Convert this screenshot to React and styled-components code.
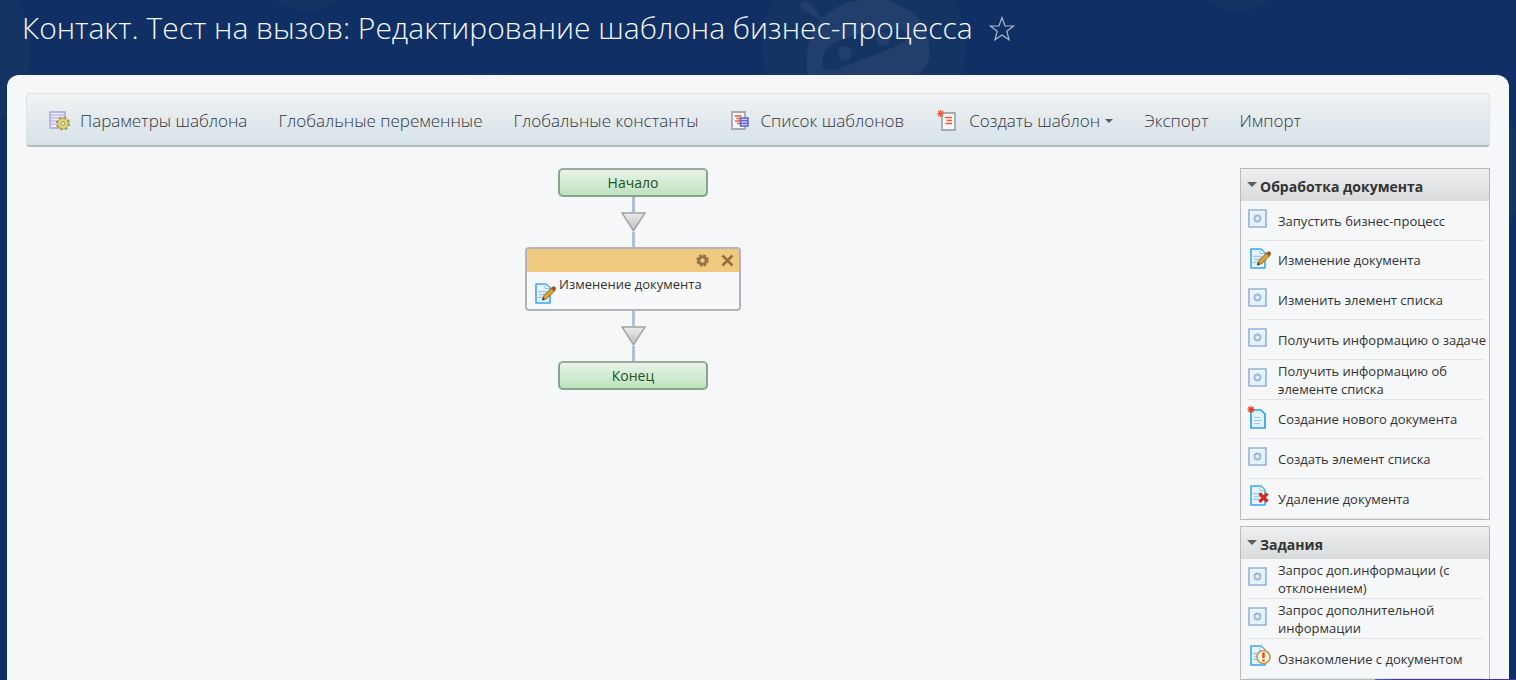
import React, { useState } from 'react';
import styled, { createGlobalStyle } from 'styled-components';

const GlobalStyle = createGlobalStyle`
  * {
    box-sizing: border-box;
  }

  body {
    margin: 0;
    background: #102f64;
    color: #333;
    font-family: 'Open Sans', 'Noto Sans', sans-serif;
    font-size: 13px;
  }
`;

const Page = styled.div`
  position: relative;
  display: flex;
  flex-direction: column;
  height: 100vh;
  overflow: hidden;
`;

const Backdrop = styled.svg`
  position: absolute;
  top: 0;
  left: 0;
  width: 100%;
  height: 100%;
`;

const PageHeader = styled.header`
  position: relative;
  display: flex;
  align-items: center;
  gap: 16px;
  flex: none;
  height: 75px;
  padding: 0 22px 18px;
`;

const Title = styled.h1`
  margin: 0;
  padding-bottom: 2px;
  color: #f4f7fb;
  font-size: 30px;
  font-weight: 300;
  line-height: 44px;
  white-space: nowrap;
`;

const PlainButton = styled.button`
  display: flex;
  padding: 0;
  border: 0;
  background: none;
  font: inherit;
  color: inherit;
  cursor: pointer;
`;

const Workarea = styled.main`
  position: relative;
  flex: 1;
  min-height: 0;
  margin: 0 7px;
  padding: 18px 19px 0;
  border-radius: 12px 12px 0 0;
  background: #f5f7f9;
`;

const Toolbar = styled.nav`
  display: flex;
  align-items: center;
  gap: 31px;
  height: 54px;
  padding: 2px 22px 0;
  border: 1px solid #dfe2e4;
  border-bottom: 2px solid #b5babe;
  border-radius: 4px;
  background: linear-gradient(#f1f2f3, #d6e2e8);
`;

const ToolbarLink = styled.a`
  display: flex;
  align-items: center;
  color: #303641;
  font-size: 17px;
  font-weight: 300;
  line-height: 24px;
  text-decoration: none;
  white-space: nowrap;

  svg {
    margin-right: 9px;
  }
`;

const Caret = styled.span`
  border: ${({ $size }) => $size}px solid transparent;
  border-top-color: #5b5f63;
  border-bottom: 0;

  ${ToolbarLink} & {
    margin-left: 5px;
  }
`;

const Columns = styled.div`
  display: flex;
  align-items: flex-start;
  margin-top: 21px;
`;

const Flow = styled.section`
  display: flex;
  flex: 1;
  flex-direction: column;
  align-items: center;
`;

const Terminal = styled.div`
  width: 150px;
  height: 29px;
  border: 2px solid #86a58a;
  border-top-color: #9bab9c;
  border-radius: 5px;
  background: linear-gradient(#e9f3e9, #bee3bf);
  color: #26501f;
  font-size: 14px;
  line-height: 25px;
  text-align: center;
`;

const Connector = styled.div`
  display: flex;
  flex-direction: column;
  align-items: center;

  &::before,
  &::after {
    content: '';
    width: 3px;
    height: 15px;
    background: #b0bfd8;
  }
`;

const Activity = styled.article`
  width: 216px;
  height: 64px;
  border: 2px solid #b5b3b9;
  border-radius: 4px;
  background: #f7f8fa;
`;

const ActivityBar = styled.div`
  display: flex;
  align-items: center;
  justify-content: flex-end;
  gap: 12px;
  height: 23px;
  padding: 0 5px;
  background: #efc980;
`;

const ActivityBody = styled.div`
  display: flex;
  gap: 2px;
  padding: 3px 5px;
  line-height: 18px;

  svg {
    margin-top: 7px;
  }
`;

const Sidebar = styled.aside`
  display: flex;
  flex: none;
  flex-direction: column;
  gap: 6px;
  width: 250px;
`;

const Group = styled.section`
  border: 1px solid #b9bcbf;
`;

const GroupTitle = styled.h2`
  margin: 0;
  background: linear-gradient(#eeeff0, #d9dadc);
  font-size: 14px;
  font-weight: 700;
`;

const GroupToggle = styled(PlainButton)`
  align-items: center;
  gap: 3px;
  width: 100%;
  padding: 4px 6px 0;
  line-height: 28px;

  ${Caret} {
    margin-bottom: 5px;
  }
`;

const List = styled.ul`
  margin: 0 6px;
  padding: 0;
  list-style: none;
`;

const Item = styled.li`
  display: grid;
  grid-template-columns: 31px 1fr;
  align-items: center;
  height: ${({ $compact }) => ($compact ? 39 : 40)}px;
  border-bottom: 1px solid #e0e2e5;
  line-height: 18px;

  svg {
    margin-bottom: ${({ $compact }) => ($compact ? 3 : 6)}px;
  }

  span {
    margin-right: -6px;
  }
`;

const ChatEdge = styled.div`
  position: fixed;
  right: 0;
  bottom: 0;
  width: 141px;
  height: 1px;
  background: linear-gradient(90deg, #4a66c4, #4033b0 20px);
`;

const StarIcon = () => (
  <svg width="26" height="26" viewBox="0 0 26 26">
    <path
      d="M13 1.5l3 8.3 8.6.2-6.8 5.2 2.3 8.6-7.1-4.9-7.1 4.9 2.3-8.6L1.4 10l8.6-.2z"
      fill="none"
      stroke="#aab5c7"
      strokeWidth="1.2"
    />
  </svg>
);

const TemplateSettingsIcon = () => (
  <svg width="22" height="22" viewBox="0 0 22 22">
    <path d="M1 2h15v16H1z" fill="#eeeefb" stroke="#a7a3d8" strokeWidth="1.4" />
    <path d="M1 5h15M1 8h15M1 11h10M1 14h8" stroke="#a7a3d8" strokeWidth="1.2" />
    <circle cx="14" cy="13.5" r="6" fill="#e3d77c" stroke="#a39a52" strokeWidth="2.2" strokeDasharray="2.7 2" />
    <circle cx="14" cy="13.5" r="5" fill="#e6da7f" stroke="#b0a65c" strokeWidth=".8" />
    <circle cx="14" cy="13.5" r="2" fill="#eef0d8" stroke="#9c9350" />
  </svg>
);

const TemplateListIcon = () => (
  <svg width="22" height="22" viewBox="0 0 22 22">
    <path d="M3 2h13v17H3z" fill="#f5f6f7" stroke="#a6a9ae" strokeWidth="1.8" />
    <path d="M5.500 6h7M7.500 8.500h4M6 11h5M8 13.500h3" stroke="#f25a36" strokeWidth="1.6" />
    <path d="M11.500 8h7.500v8h-7.500z" fill="#cfcff6" stroke="#6562cb" strokeWidth="1.5" />
    <path d="M12 10.700h7M12 13.300h7" stroke="#6562cb" strokeWidth="1.3" />
  </svg>
);

const NewTemplateIcon = () => (
  <svg width="25" height="24" viewBox="0 0 25 24">
    <path d="M7 4h13v17H7z" fill="#f5f6f7" stroke="#a6a9ae" strokeWidth="1.8" />
    <path d="M10 8.500h7M11.500 11.500h5.500M10.500 14.500h6.500" stroke="#f25a36" strokeWidth="1.6" />
    <path d="M5.500 1v7M2 4.500h7M3 2l5 5M8 2L3 7" stroke="#f25a36" strokeWidth="1.2" />
  </svg>
);

const BoxIcon = () => (
  <svg width="20" height="20" viewBox="0 0 20 20">
    <path d="M2 2h17v17H2z" fill="#e0f4fb" stroke="#9aaedc" strokeWidth="1.6" />
    <path d="M3.500 17.500v-14h14" fill="none" stroke="#f4fbfe" />
    <circle cx="10.500" cy="10.500" r="3" fill="#dcecf8" stroke="#a9b2d8" strokeWidth="1.8" />
  </svg>
);

const Sheet = () => (
  <>
    <path d="M4 2h10l4 4v15H4z" fill="#e6f4fe" stroke="#3ea5ef" strokeWidth="1.6" strokeLinejoin="round" />
    <path d="M13 2v4.500h5" fill="#fff" stroke="#80c5f5" />
    <path d="M6 9.500h9M7 12.500h8M6 15.500h8" stroke="#a6c9ea" strokeWidth="1.3" />
  </>
);

const EditIcon = () => (
  <svg width="25" height="23" viewBox="0 0 25 23">
    <Sheet />
    <path d="M10.500 18l1.500-4.500L20.500 5l3 3-8.700 8.500z" fill="#dba52f" stroke="#8a641d" />
    <path d="M19 6.500L20.800 4.800a1.500 1.500 0 0 1 2.500 2.700l-1.600 1.700z" fill="#9a572c" />
    <path d="M10 18.500l1-3 2 1.800z" fill="#3d3525" />
  </svg>
);

const CreateIcon = () => (
  <svg width="25" height="25" viewBox="0 0 25 25">
    <path d="M4 5h10l4 4v14H4z" fill="#e2f3fe" stroke="#2fa0ee" strokeWidth="1.7" strokeLinejoin="round" />
    <path d="M7 12.500h6M7 15.500h8M7 18.500h6" stroke="#a3c6e8" strokeWidth="1.2" />
    <path d="M4 1v7M.5 4.500h7M1.500 2l5 5M6.500 2l-5 5" stroke="#f03e1c" strokeWidth="1.3" />
  </svg>
);

const DeleteIcon = () => (
  <svg width="25" height="23" viewBox="0 0 25 23">
    <Sheet />
    <path d="M12.500 9.500l8 8M20.500 9.500l-8 8.500" stroke="#d6281a" strokeWidth="3.2" />
  </svg>
);

const NoticeIcon = () => (
  <svg width="25" height="23" viewBox="0 0 25 23">
    <Sheet />
    <circle cx="16.500" cy="13" r="6.500" fill="#fbf6d8" stroke="#bd9c54" strokeWidth="1.7" />
    <path d="M16.500 8.500v5.500M16.500 15.500v2" stroke="#ee3a1c" strokeWidth="2.4" />
  </svg>
);

const GearIcon = () => (
  <svg width="13" height="13" viewBox="0 0 13 13">
    <circle cx="6.500" cy="6.500" r="5" fill="none" stroke="#927247" strokeWidth="2.4" strokeDasharray="2.6 1.327" />
    <circle cx="6.500" cy="6.500" r="3.500" fill="none" stroke="#927247" strokeWidth="2.6" />
  </svg>
);

const CloseIcon = () => (
  <svg width="13" height="13" viewBox="0 0 13 13">
    <path d="M1.500 1.500l10 10M11.500 1.500l-10 10" stroke="#92703f" strokeWidth="2.6" />
  </svg>
);

const Arrow = () => (
  <Connector>
    <svg width="25" height="20" viewBox="0 0 25 20">
      <defs>
        <linearGradient id="arrow" x2="0" y2="1">
          <stop offset="0" stopColor="#ececed" />
          <stop offset="1" stopColor="#bcbdbe" />
        </linearGradient>
      </defs>
      <path d="M1 1h23L12.500 18.800z" fill="url(#arrow)" stroke="#a2a3a5" strokeWidth="1.5" />
    </svg>
  </Connector>
);

const icons = {
  box: BoxIcon,
  edit: EditIcon,
  create: CreateIcon,
  remove: DeleteIcon,
  notice: NoticeIcon,
};

const toolbar = [
  { label: 'Параметры шаблона', Icon: TemplateSettingsIcon },
  { label: 'Глобальные переменные' },
  { label: 'Глобальные константы' },
  { label: 'Список шаблонов', Icon: TemplateListIcon },
  { label: 'Создать шаблон', Icon: NewTemplateIcon, menu: true },
  { label: 'Экспорт' },
  { label: 'Импорт' },
];

const groups = [
  {
    title: 'Обработка документа',
    items: [
      ['box', 'Запустить бизнес-процесс'],
      ['edit', 'Изменение документа'],
      ['box', 'Изменить элемент списка'],
      ['box', 'Получить информацию о задаче'],
      ['box', 'Получить информацию об элементе списка'],
      ['create', 'Создание нового документа'],
      ['box', 'Создать элемент списка'],
      ['remove', 'Удаление документа'],
    ],
  },
  {
    title: 'Задания',
    items: [
      ['box', 'Запрос доп.информации (с отклонением)'],
      ['box', 'Запрос дополнительной информации'],
      ['notice', 'Ознакомление с документом'],
    ],
  },
];

const ActivityGroup = ({ title, items }) => {
  const [open, setOpen] = useState(true);

  return (
    <Group>
      <GroupTitle>
        <GroupToggle aria-expanded={open} onClick={() => setOpen(!open)}>
          <Caret $size={5} />
          {title}
        </GroupToggle>
      </GroupTitle>
      {open && (
        <List>
          {items.map(([icon, label]) => {
            const Icon = icons[icon];
            return (
              <Item key={label} $compact={icon === 'edit' || icon === 'create'}>
                <Icon />
                <span>{label}</span>
              </Item>
            );
          })}
        </List>
      )}
    </Group>
  );
};

const App = () => (
  <>
    <GlobalStyle />
    <Page>
      <Backdrop aria-hidden="true">
        <g fill="#143464">
          <circle cx="-70" cy="48" r="101" />
          <circle cx="864" cy="48" r="102" />
          <circle cx="306" cy="-40" r="51" />
          <circle cx="1239" cy="-40" r="51" />
          <circle cx="490" cy="172" r="100" />
          <circle cx="1424" cy="172" r="100" />
        </g>
        <path
          d="M807 80V57c0-14 5-27 14-36L801 8c-3-6 4-10 9-5l12 15c14-12 27-18 44-18 4 0 14-5 21 0 22 7 38 20 41 38 4 18 2 28-10 37z"
          fill="#223e6d"
        />
        <path d="M825 69c-6-4-2-20 9-26 18-9 40-15 66-14 9 1 9 11 2 15l-59 23c-7 3-14 5-18 2z" fill="#143464" />
        <circle cx="845" cy="53" r="7" fill="#223e6d" />
        <circle cx="883" cy="39" r="7" fill="#223e6d" />
      </Backdrop>
      <PageHeader>
        <Title>Контакт. Тест на вызов: Редактирование шаблона бизнес-процесса</Title>
        <PlainButton aria-label="В избранное">
          <StarIcon />
        </PlainButton>
      </PageHeader>
      <Workarea>
        <Toolbar>
          {toolbar.map(({ label, Icon, menu }) => (
            <ToolbarLink href="#" key={label}>
              {Icon && <Icon />}
              {label}
              {menu && <Caret $size={4} />}
            </ToolbarLink>
          ))}
        </Toolbar>
        <Columns>
          <Flow>
            <Terminal>Начало</Terminal>
            <Arrow />
            <Activity>
              <ActivityBar>
                <PlainButton aria-label="Настройки">
                  <GearIcon />
                </PlainButton>
                <PlainButton aria-label="Удалить">
                  <CloseIcon />
                </PlainButton>
              </ActivityBar>
              <ActivityBody>
                <EditIcon />
                Изменение документа
              </ActivityBody>
            </Activity>
            <Arrow />
            <Terminal>Конец</Terminal>
          </Flow>
          <Sidebar>
            {groups.map((group) => (
              <ActivityGroup key={group.title} {...group} />
            ))}
          </Sidebar>
        </Columns>
      </Workarea>
      <ChatEdge />
    </Page>
  </>
);

export default App;
